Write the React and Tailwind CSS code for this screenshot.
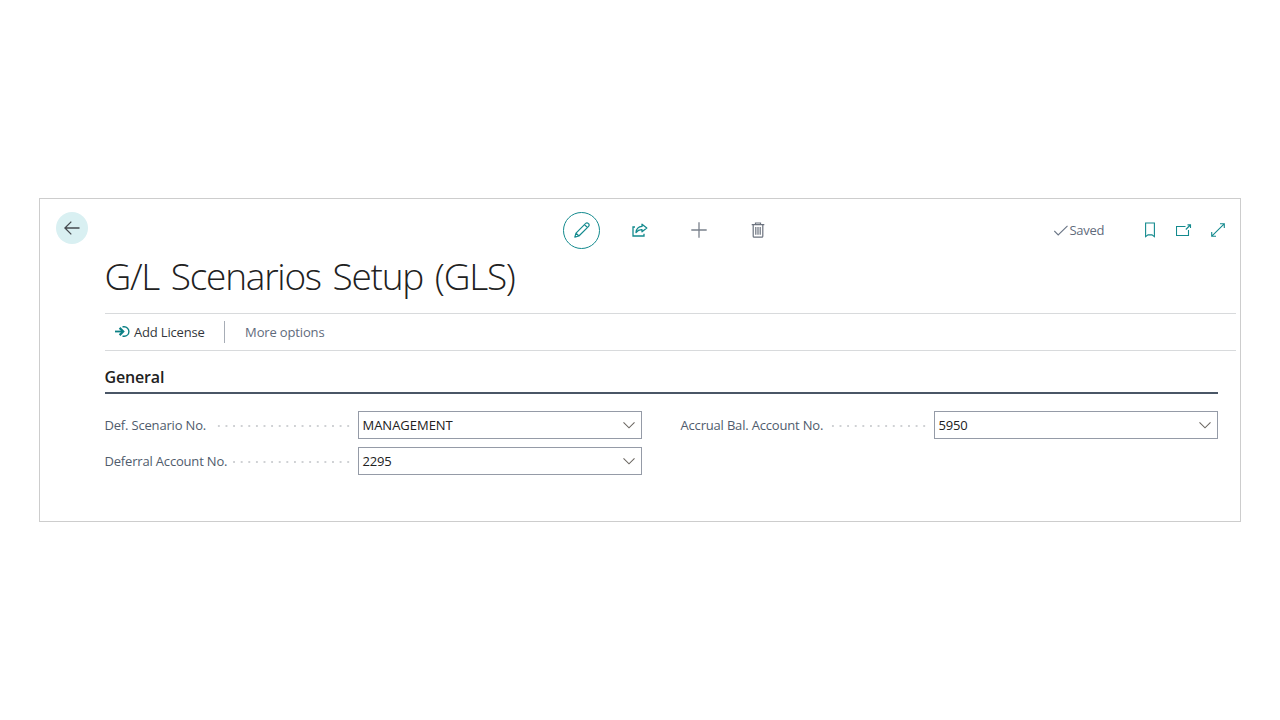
import React from "react";

const fields = [
  { label: "Def. Scenario No.", value: "MANAGEMENT", labelClass: "tracking-[-0.18px]", valueClass: "tracking-[-0.02px]", dots: "w-[135px]" },
  { label: "Accrual Bal. Account No.", value: "5950", labelClass: "tracking-[-0.18px]", valueClass: "tracking-[-0.2px]", dots: "w-[97px]" },
  { label: "Deferral Account No.", value: "2295", labelClass: "tracking-[-0.18px]", valueClass: "tracking-[-0.2px]", dots: "w-[120px]" },
];

const BackIcon = () => (
  <svg width="16" height="14" viewBox="0 0 16 14" fill="none" stroke="#454a4f" strokeWidth="1.3">
    <path d="M7.3.6.9 7l6.4 6.4M1 7h14.5" />
  </svg>
);

const PencilIcon = () => (
  <svg width="16" height="16" viewBox="0 0 16 16" fill="none" stroke="#138a8e" strokeWidth="1.2" strokeLinejoin="round">
    <path d="M.8 15.2 2 11.1 11.7 1.4a1.7 1.7 0 0 1 2.5 0l.4.4a1.7 1.7 0 0 1 0 2.5L4.9 14zM2 11.1 4.9 14M10.5 2.6l2.9 2.9" />
  </svg>
);

const ShareIcon = () => (
  <svg width="16" height="14" viewBox="0 0 16 14" fill="none" stroke="#138a8e" strokeWidth="1.3">
    <path d="M3 4H1v9h11v-2.2" />
    <path d="M10 1.2 14.8 5 10 8.8V6.7C7.3 6.5 5.6 7.5 4 9.5 4.3 6 6.3 3.7 10 3.4z" strokeLinejoin="round" />
  </svg>
);

const PlusIcon = () => (
  <svg width="16" height="16" viewBox="0 0 16 16" fill="none" stroke="#7a818c" strokeWidth="1.3">
    <path d="M8 .3v15.4M.3 8h15.4" />
  </svg>
);

const TrashIcon = () => (
  <svg width="14" height="16" viewBox="0 0 14 16" fill="none" stroke="#6b727e" strokeWidth="1.2">
    <path d="M.7 2.7h12.6M4.5 2.5V1h5v1.5M2.2 3v11.2q0 .9.9.9h7.8q.9 0 .9-.9V3M4.8 5v7.8M7 5v7.8M9.2 5v7.8" />
  </svg>
);

const CheckIcon = () => (
  <svg width="15" height="11" viewBox="0 0 15 11" fill="none" stroke="#6b7686" strokeWidth="1.1">
    <path d="m.3 6 3.9 3.9L13.5.8" />
  </svg>
);

const BookmarkIcon = () => (
  <svg width="10" height="16" viewBox="0 0 10 16" fill="none" stroke="#138a8e" strokeWidth="1.1">
    <path d="M.6 1h8.8v13.6L7 12.9H3L.6 14.6z" />
  </svg>
);

const PopOutIcon = () => (
  <svg width="16" height="12" viewBox="0 0 16 12" fill="none" stroke="#138a8e" strokeWidth="1.1">
    <path d="M9.5 2.5h-9v9h12V6M9.8 5.5l4.5-4.5M11.5.9h3v3" />
  </svg>
);

const ExpandIcon = () => (
  <svg width="14" height="14" viewBox="0 0 14 14" fill="none" stroke="#138a8e" strokeWidth="1.1">
    <path d="M.8 13.2 13.2.8M9 .7h4.3V5M.7 9v4.3H5" />
  </svg>
);

const LicenseIcon = () => (
  <svg width="15" height="12" viewBox="0 0 15 12" fill="none" stroke="#0b8085">
    <path d="M0 5.5h8" strokeWidth="1.8" />
    <path d="m4.6 1.9 3.6 3.6-3.6 3.6" strokeWidth="2.2" />
    <path d="M7.5.8h1.7a4.7 4.7 0 0 1 0 9.4H7.5" strokeWidth="1.4" />
  </svg>
);

const ChevronIcon = () => (
  <svg width="12" height="8" viewBox="0 0 12 8" fill="none" stroke="#6c6762" strokeWidth="1.1">
    <path d="m.5 1.3 5.5 5.5 5.5-5.5" />
  </svg>
);

const Field = ({ label, value, labelClass, valueClass, dots }) => (
  <div className="flex h-7 items-center">
    <div className="flex w-[253px] items-center justify-between pr-1.5">
      <span className={`whitespace-nowrap pt-0.5 text-[13px] text-[#505c6d] ${labelClass}`}>{label}</span>
      <span
        className={`mt-0.5 h-0.5 shrink-0 bg-[radial-gradient(circle,#cfd1d4_0.9px,transparent_1.1px)] bg-[length:7.61px_2px] bg-right bg-repeat-x ${dots}`}
      />
    </div>
    <button className="flex h-7 w-[284px] items-center justify-between border border-[#959ba7] pl-1 pr-1.5">
      <span className={`pt-0.5 text-[13px] text-[#212121] ${valueClass}`}>{value}</span>
      <ChevronIcon />
    </button>
  </div>
);

const Header = () => (
  <header className="flex h-[62px] items-center">
    <button className="mb-1 ml-4 flex size-8 items-center justify-center rounded-full bg-[#d9f0f2]">
      <BackIcon />
    </button>
    <div className="ml-[475px] flex items-center">
      <button className="flex size-[37px] items-center justify-center rounded-full border border-[#138a8e]">
        <PencilIcon />
      </button>
      <button className="ml-8"><ShareIcon /></button>
      <button className="ml-[43px]"><PlusIcon /></button>
      <button className="ml-[43.5px]"><TrashIcon /></button>
    </div>
    <div className="ml-auto mr-[15px] flex items-center">
      <CheckIcon />
      <span className="w-[76.5px] pl-px pt-0.5 text-[13px] tracking-[-0.3px] text-[#5f6b7c]">Saved</span>
      <button><BookmarkIcon /></button>
      <button className="ml-[21px]"><PopOutIcon /></button>
      <button className="ml-[19px]"><ExpandIcon /></button>
    </div>
  </header>
);

const App = () => (
  <main className="h-screen bg-white pl-[39px] pt-[198px] font-['Open_Sans','Noto_Sans',sans-serif]">
    <section className="h-[324px] w-[1202px] border border-[#cdcdcd]">
      <Header />
      <div className="pl-[64.5px] pr-[4.5px]">
        <h1 className="h-[52px] whitespace-nowrap text-[37px] font-light leading-[29px] tracking-[-1.25px] text-[#212121] [word-spacing:3.4px]">
          G/L Scenarios Setup (GLS)
        </h1>
        <nav className="flex h-[38px] items-center border-y border-[#d8dadc] pl-2.5 text-[13px]">
          <LicenseIcon />
          <span className="ml-[4.5px] whitespace-nowrap pt-0.5 tracking-[-0.18px] text-[#33373c]">Add License</span>
          <span className="ml-[19.5px] h-[22px] w-px bg-[#a7adb6]" />
          <span className="ml-5 whitespace-nowrap pt-0.5 tracking-[-0.15px] text-[#5f6b7c]">More options</span>
        </nav>
        <div className="mr-[17.5px]">
          <h2 className="h-[43px] border-b-2 border-[#4a5666] pt-[14px] text-base font-semibold leading-6 tracking-[-0.15px] text-[#212121]">
            General
          </h2>
          <div className="mt-[17px] grid grid-cols-[537px_537px] gap-x-[39px] gap-y-2">
            {fields.map((field) => (
              <Field key={field.label} {...field} />
            ))}
          </div>
        </div>
      </div>
    </section>
  </main>
);

export default App;
